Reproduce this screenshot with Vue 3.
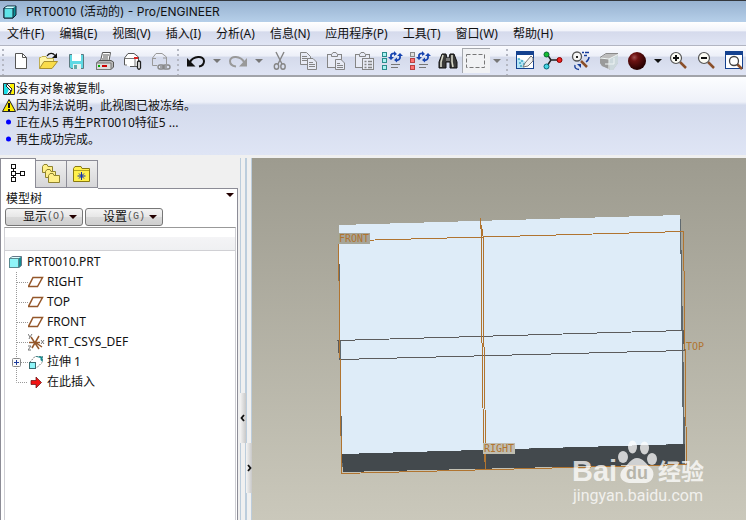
<script setup>
import { ref } from 'vue'

const menus = ['文件(F)', '编辑(E)', '视图(V)', '插入(I)', '分析(A)', '信息(N)', '应用程序(P)', '工具(T)', '窗口(W)', '帮助(H)']

const messages = [
  { kind: 'stop', text: '没有对象被复制。' },
  { kind: 'warn', text: '因为非法说明，此视图已被冻结。' },
  { kind: 'info', text: '正在从5 再生PRT0010特征5 ...' },
  { kind: 'info', text: '再生成功完成。' }
]

const features = [
  { icon: 'plane', text: 'RIGHT' },
  { icon: 'plane', text: 'TOP' },
  { icon: 'plane', text: 'FRONT' },
  { icon: 'csys', text: 'PRT_CSYS_DEF' },
  { icon: 'extrude', text: '拉伸 1', branch: true },
  { icon: 'insert', text: '在此插入' }
]

const activeTab = ref(0)
</script>

<template>
  <div class="app">
    <header class="title">
      <svg width="14" height="14" viewBox="0 0 14 14" aria-hidden="true">
        <path d="M1 3L4 1H13V10L10 13H1Z" fill="#0a8f96" stroke="#123" />
        <path d="M1 3H10V13H1Z" fill="#5fe3e8" stroke="#123" />
        <path d="M1.5 3L4 1.5H12.5L10 3Z" fill="#d8ffff" />
      </svg>
      <h1>PRT0010 (活动的) - Pro/ENGINEER</h1>
    </header>

    <nav class="menu">
      <button v-for="m in menus" :key="m" type="button">{{ m }}</button>
    </nav>

    <div class="toolbar" role="toolbar">
      <span class="grip"></span>
      <button type="button" aria-label="新建">
        <svg viewBox="0 0 28 30"><path d="M8.500 7.500H15.500L19.500 11.500V22.500H8.500Z" fill="#fff" stroke="#555" /><path d="M15.500 7.500V11.500H19.500" fill="none" stroke="#555" /></svg>
      </button>
      <button type="button" aria-label="打开">
        <svg viewBox="0 0 28 30"><path d="M4.500 22V11.500H6L7 10.500H11L12 12.500H18.500V15" fill="#fff6a8" stroke="#c0ae50" /><path d="M4.500 22.500L9 15.500H22.500L17 22.500Z" fill="#f9dc4a" stroke="#a89030" /><path d="M12 10C14 6.500 18 6.500 20 9.500" fill="none" stroke="#111" stroke-width="1.300" /><path d="M22 7V12H17Z" fill="#111" /></svg>
      </button>
      <button type="button" aria-label="保存">
        <svg viewBox="0 0 28 30"><path d="M6.500 8.500H20.500V22.500H8L6.500 21Z" fill="#5fd9e4" stroke="#5c7a80" /><rect x="9" y="8" width="9" height="7" fill="#fff" /><rect x="10" y="18" width="8" height="5" fill="#e8f0f0" /><rect x="11" y="19" width="3" height="4" fill="#6aa" /></svg>
      </button>
      <button type="button" aria-label="打印">
        <svg viewBox="0 0 28 30"><path d="M9.500 15L11.500 6.500H19.500L18 15" fill="#fff" stroke="#555" /><path d="M12 9H18M12 11H17M11 13H17" stroke="#555" /><path d="M5.500 17L8 14.500H20L22.500 16V21L20 23.500H5.500Z" fill="#b8b8b8" stroke="#555" /><path d="M5.500 17H20V23.500H5.500Z" fill="#dcdcdc" stroke="#777" /><rect x="7" y="19" width="2" height="2" fill="#0a0" /><rect x="11" y="19" width="5" height="2" fill="#c00" /></svg>
      </button>
      <button type="button" aria-label="发送邮件">
        <svg viewBox="0 0 28 30"><path d="M5.500 19V12L9 7.500H15L19.500 11V20.500H11" fill="#fff" stroke="#555" /><path d="M5.500 12.500H16V20.500M5.500 19H8" fill="none" stroke="#777" /><rect x="15" y="11" width="4" height="2" fill="#d22" /><path d="M18.500 22V16Q20 14 21.500 16V22Q20 24.500 18.500 22V18" fill="#eee" stroke="#222" stroke-width="1.300" /></svg>
      </button>
      <button type="button" aria-label="发送链接">
        <svg viewBox="0 0 28 30"><path d="M10 19.500H5.500V12L9 7.500H15L19.500 11V18M5.500 12.500H9M16 12H19" fill="none" stroke="#999" /><g fill="none" stroke="#888" stroke-width="1.400"><rect x="11" y="19" width="6" height="4" rx="2" /><rect x="16" y="19" width="7" height="4" rx="2" /><path d="M13 21H20" /></g></svg>
      </button>
      <span class="grip"></span>
      <button type="button" aria-label="撤消">
        <svg viewBox="0 0 28 30"><path d="M8 16C11 10 22 9 22 15C22 18 20 20 17 20.500" fill="none" stroke="#111" stroke-width="2" /><path d="M5 12V20.500H13.500Z" fill="#111" /></svg>
      </button>
      <button class="drop" type="button" aria-label="撤消列表"><i></i></button>
      <button type="button" aria-label="重做">
        <svg viewBox="0 0 28 30"><path d="M20 16C17 10 6 9 6 15C6 18 8 20 12 20.500" fill="none" stroke="#999" stroke-width="2" /><path d="M23 12V20.500H15Z" fill="#999" /></svg>
      </button>
      <button class="drop" type="button" aria-label="重做列表"><i></i></button>
      <button type="button" aria-label="剪切">
        <svg viewBox="0 0 28 30"><g fill="none" stroke="#858585" stroke-width="1.400"><path d="M10 6L16 18M18 6L12 18" /><ellipse cx="10.500" cy="20.500" rx="2.200" ry="2.800" /><ellipse cx="17" cy="20.500" rx="2.200" ry="2.800" /></g></svg>
      </button>
      <button type="button" aria-label="复制">
        <svg viewBox="0 0 28 30"><g fill="#e8ebf5" stroke="#858585"><path d="M6.500 6.500H12.500L16.500 10.500V18.500H6.500Z" /><path d="M8 10.500H13M8 12.500H14M8 14.500H14" /><path d="M13.500 12.500H19L22.500 16V23.500H13.500Z" /><path d="M15 16.500H19M15 18.500H21M15 20.500H21" /></g></svg>
      </button>
      <button type="button" aria-label="粘贴">
        <svg viewBox="0 0 28 30"><g fill="#e8ebf5" stroke="#858585"><rect x="5.500" y="8.500" width="14" height="13" /><path d="M9.500 10.500V8.500L11 6.500H14L15.500 8.500V10.500Z" /><path d="M13.500 13.500H19L22.500 17V23.500H13.500Z" /><path d="M15 17.500H18M15 19.500H21M15 21.500H21" /></g></svg>
      </button>
      <button type="button" aria-label="选择性粘贴">
        <svg viewBox="0 0 28 30"><g fill="#e8ebf5" stroke="#858585"><rect x="5.500" y="8.500" width="14" height="13" /><path d="M9.500 10.500V8.500L11 6.500H14L15.500 8.500V10.500Z" /><rect x="12.500" y="12.500" width="11" height="11" /><path d="M14.500 15.500H16.500M18 15.500H22M14.500 18.500H16.500M18 18.500H22M14.500 21.500H16.500M18 21.500H22" stroke-width="1.500" /></g></svg>
      </button>
      <button type="button" aria-label="再生">
        <svg viewBox="0 0 28 30"><g fill="#a8f2f2" stroke="#2a8c8c"><rect x="4.500" y="6.500" width="4" height="4" /><rect x="4.500" y="12.500" width="4" height="4" /><rect x="4.500" y="19.500" width="4" height="4" /></g><path d="M13 13V9Q14 7 17 7.500M22 8V12Q21 15 18 14" fill="none" stroke="#1744b0" stroke-width="1.800" /><path d="M10 11H16L13 14ZM19 10H25L22 7ZM16 5L19 8L16 10ZM19 11.500V16.500L16 14Z" fill="#1744b0" /><path d="M13 18.500H22M13 21.500H20" stroke="#777" /></svg>
      </button>
      <button type="button" aria-label="再生管理器">
        <svg viewBox="0 0 28 30"><rect x="4.500" y="6.500" width="4" height="4" fill="#ddd" stroke="#888" /><g fill="#ff7070" stroke="#b84040"><rect x="4.500" y="12.500" width="4" height="4" /><rect x="4.500" y="19.500" width="4" height="4" /></g><path d="M13 13V9Q14 7 17 7.500M22 8V12Q21 15 18 14" fill="none" stroke="#1744b0" stroke-width="1.800" /><path d="M10 11H16L13 14ZM19 10H25L22 7ZM16 5L19 8L16 10ZM19 11.500V16.500L16 14Z" fill="#1744b0" /><path d="M13 18.500H22M13 21.500H20" stroke="#777" /></svg>
      </button>
      <button type="button" aria-label="查找">
        <svg viewBox="0 0 28 30"><path d="M8 8H12L13 12H15L16 8H20L23 16V22H16V16H12V22H5V16Z" fill="#3a3a38" stroke="#111" /><path d="M9 9L7 16V21M18 9V16L19 21" fill="none" stroke="#d8d8c8" stroke-width="1.600" /><rect x="12" y="12" width="4" height="3" fill="#777" /></svg>
      </button>
      <button class="pressed" type="button" aria-label="选取框">
        <svg viewBox="0 0 28 30"><rect x="4.500" y="8.500" width="18" height="13" fill="none" stroke="#777" stroke-dasharray="4 2" /></svg>
      </button>
      <button class="drop" type="button" aria-label="选取方式"><i></i></button>
      <span class="grip"></span>
      <button type="button" aria-label="重画">
        <svg viewBox="0 0 28 30"><rect x="5.500" y="5.500" width="17" height="17" fill="#fff" stroke="#14418f" /><rect x="5" y="5" width="18" height="4" fill="#14418f" /><path d="M6 12L12 14L17 18L13 22H6Z" fill="#b5e4f6" /><path d="M7 13H9M10 15H12M8 17H10M12 18H14M9 20H11" stroke="#08a" /><path d="M14 17L20 10L22 12V15L17 20L12 21Z" fill="#f0f0f0" stroke="#777" /></svg>
      </button>
      <button type="button" aria-label="旋转中心">
        <svg viewBox="0 0 28 30"><path d="M8 8L12 14L8 20M12 14H20" fill="none" stroke="#222" stroke-width="1.500" /><circle cx="7.500" cy="8.500" r="2.500" fill="#15bd30" stroke="#063" /><circle cx="7.500" cy="20.500" r="2.500" fill="#45d7e5" stroke="#067" /><circle cx="20.500" cy="14" r="2.500" fill="#f02020" stroke="#800" /></svg>
      </button>
      <button type="button" aria-label="定向模式">
        <svg viewBox="0 0 28 30"><path d="M14 15L20 21" stroke="#8a4f2a" stroke-width="2.500" /><circle cx="10" cy="10.500" r="4.500" fill="#f4f4f4" stroke="#555" stroke-width="1.300" /><rect x="9" y="10" width="2" height="2" fill="#222" /><path d="M15 6.500H17M18 6.500H22M17 9.500H20M22 11Q22 14 19 16M8 19Q7 23 12 23.500" fill="none" stroke="#173d99" stroke-width="1.400" /><path d="M10 18H14V22Z" fill="#173d99" /></svg>
      </button>
      <button type="button" aria-label="外观库">
        <svg viewBox="0 0 28 30"><path d="M5 12L11 8H23V17L18 24L7 20L5 17Z" fill="#bdbdbd" /><path d="M5 12L14 13L16 24L7 20L5 17Z" fill="#9a9a9a" /><path d="M14 13L23 9V17L18 24H15Z" fill="#ccd8dc" /><path d="M5 12L14 13L23 8.500M14 13V23M10 18H19V12" fill="none" stroke="#eef4f4" /><path d="M5 11.500L11 7.500H23" fill="none" stroke="#8a8a8a" /></svg>
      </button>
      <button type="button" aria-label="着色">
        <svg viewBox="0 0 28 30">
          <defs><radialGradient id="ball" cx="35%" cy="30%" r="70%"><stop offset="0" stop-color="#a05050" /><stop offset=".3" stop-color="#6d1212" /><stop offset="1" stop-color="#240000" /></radialGradient></defs>
          <circle cx="14" cy="15" r="9" fill="url(#ball)" />
        </svg>
      </button>
      <button class="drop dark" type="button" aria-label="着色方式"><i></i></button>
      <button type="button" aria-label="放大">
        <svg viewBox="0 0 28 30"><path d="M15 16L21 22" stroke="#8a4f2a" stroke-width="2.500" /><circle cx="11" cy="12" r="5.500" fill="#fbfbf4" stroke="#555" stroke-width="1.200" /><path d="M8 12H14M11 9V15" stroke="#111" stroke-width="2" /></svg>
      </button>
      <button type="button" aria-label="缩小">
        <svg viewBox="0 0 28 30"><path d="M15 16L21 22" stroke="#8a4f2a" stroke-width="2.500" /><circle cx="11" cy="12" r="5.500" fill="#fbfbf4" stroke="#555" stroke-width="1.200" /><path d="M8 12H14" stroke="#111" stroke-width="2" /></svg>
      </button>
      <button type="button" aria-label="重新调整">
        <svg viewBox="0 0 28 30"><rect x="4.500" y="5.500" width="17" height="17" fill="#fff" stroke="#14418f" /><rect x="4" y="5" width="18" height="4" fill="#14418f" /><path d="M16 18L21 23" stroke="#8a4f2a" stroke-width="2.500" /><circle cx="13" cy="15" r="4.500" fill="#fff" stroke="#444" stroke-width="1.300" /></svg>
      </button>
    </div>

    <ul class="messages">
      <li v-for="m in messages" :key="m.text">
        <svg v-if="m.kind === 'stop'" viewBox="0 0 14 16"><path d="M1 2H6L4 6L7 8L5 13H1Z" fill="#19dfe8" /><path d="M9 2H12V13H8L11 8L7 6Z" fill="#fff200" /><path d="M6 2L4 5L9 10L6 13M5 3L10 8L8 13" fill="none" stroke="#222" /><path d="M1.500 2.500H12.500V13.500H1.500Z" fill="none" stroke="#333" /></svg>
        <svg v-else-if="m.kind === 'warn'" viewBox="0 0 14 16"><path d="M7 1.500L13.500 13.500H.5Z" fill="#ffee00" stroke="#222" /><path d="M7 5V10M7 11V13" stroke="#111" stroke-width="2" /></svg>
        <svg v-else viewBox="0 0 14 16"><circle cx="6.500" cy="7" r="2.500" fill="#00f" /></svg>
        <span>{{ m.text }}</span>
      </li>
    </ul>

    <main class="work">
      <aside class="navigator">
        <div class="tabs" role="tablist">
          <button type="button" role="tab" aria-label="模型树" :class="{ on: activeTab === 0 }" @click="activeTab = 0">
            <svg width="18" height="20" viewBox="0 0 18 20"><g fill="#fff" stroke="#111"><path d="M4.500 5V16M7 9.500H12" /><rect x="2.500" y=".5" width="4" height="4" /><rect x="2.500" y="7.500" width="4" height="4" /><rect x="2.500" y="13.500" width="4" height="4" /><rect x="11.500" y="7.500" width="4" height="4" /></g></svg>
          </button>
          <button type="button" role="tab" aria-label="文件夹" :class="{ on: activeTab === 1 }" @click="activeTab = 1">
            <svg width="18" height="20" viewBox="0 0 18 20"><g fill="#fff08a" stroke="#8f8330"><path d="M.5 8.500V2.500L2 .5H5L6 2.500H10.500V8.500Z" /><path d="M3.500 13.500V7.500L5 5.500H8L9 7.500H13.500V13.500Z" /><path d="M6.500 18.500V11.500L8 9.500H11L12 11.500H17.500V18.500Z" /></g></svg>
          </button>
          <button type="button" role="tab" aria-label="收藏夹" :class="{ on: activeTab === 2 }" @click="activeTab = 2">
            <svg width="18" height="20" viewBox="0 0 18 20"><path d="M.5 17.500V4.500L2 2.500H8L9 4.500H16.500V17.500Z" fill="#fff04c" stroke="#8a7a10" /><path d="M1 6.500H16" stroke="#b5a520" /><path d="M8.500 8V16M4.500 12H12.500M6 9.500L11 14.500M11 9.500L6 14.500" stroke="#1030b0" /></svg>
          </button>
        </div>

        <section class="panel">
          <div class="caption"><h2>模型树</h2><i></i></div>
          <div class="actions">
            <button type="button">显示<span>(O)</span><i></i></button>
            <button type="button">设置<span>(G)</span><i></i></button>
          </div>
          <div class="tree">
            <div class="head"></div>
            <p class="root">
              <svg width="14" height="14" viewBox="0 0 14 14"><path d="M.5 3.500L3.500 1.500H12.500V10.500L10 12.500H.5Z" fill="#128c92" stroke="#678" /><rect x=".5" y="3.500" width="9" height="9" fill="#8ff5f8" stroke="#5a8a90" /><path d="M1.500 3L3.500 2H12L10 3Z" fill="#e0ffff" /></svg>
              <span>PRT0010.PRT</span>
            </p>
            <ul>
              <li v-for="(f, i) in features" :key="f.text">
                <svg class="guide" viewBox="0 0 16 20">
                  <path :d="i === features.length - 1 ? 'M4.500 0V10.500H16' : 'M4.500 0V20M5 10.500H16'" fill="none" stroke="#999" stroke-dasharray="1 1" />
                  <g v-if="f.branch"><rect x=".5" y="6.500" width="8" height="8" rx="1" fill="#fafafa" stroke="#888" /><path d="M2 10.500H7M4.500 8V13" stroke="#1b3a9c" /></g>
                </svg>
                <svg class="icon" viewBox="0 0 18 20">
                  <path v-if="f.icon === 'plane'" d="M5 5.500H14.500L9.500 14.500H.5Z" fill="#fff" stroke="#94572a" stroke-width="1.500" />
                  <g v-else-if="f.icon === 'csys'" fill="none"><path d="M1 10.500H12M3 5L11 17M11 4L4 16M7.500 10.500L14 15" stroke="#94572a" stroke-width="1.500" /><path d="M0 2L2 5L4 2M2 5L1 7M13 8L16 12M16 8L13 12M0 14H3L0 18H3" stroke="#777" /></g>
                  <g v-else-if="f.icon === 'extrude'"><path d="M1.500 10.500L7 4.500H14.500V10L8.500 16" fill="#fff" stroke="#777" stroke-dasharray="2 1" /><path d="M7 4.500H14.500V10L12.500 8V6Z" fill="#128c92" /><rect x="1.500" y="10.500" width="6" height="6" fill="#8ff5f8" stroke="#386a70" /></g>
                  <path v-else d="M3 8.500H8V5L13.500 10.500L8 16V12.500H3Z" fill="#f01414" stroke="#601010" stroke-width=".7" />
                </svg>
                <span>{{ f.text }}</span>
              </li>
            </ul>
          </div>
        </section>
      </aside>

      <div class="sash">
        <button type="button" class="left" aria-label="折叠导航器"><svg width="6" height="8" viewBox="0 0 6 8"><path d="M4 1L1.500 4L4 7" fill="none" stroke="#111" stroke-width="1.800" /></svg></button>
        <button type="button" class="right" aria-label="展开浏览器"><svg width="6" height="8" viewBox="0 0 6 8"><path d="M2 1L4.500 4L2 7" fill="none" stroke="#111" stroke-width="1.800" /></svg></button>
      </div>

      <section class="view">
        <svg viewBox="252 158 494 362" preserveAspectRatio="xMinYMin meet">
          <g shape-rendering="crispEdges">
            <path d="M339 225L680 215L681 222L685 444V464L343 472L341 453Z" fill="#5f696f" />
            <path d="M339 225L680 215L683 444L342 454Z" fill="#deecf8" />
            <path d="M342 454L685 444V464L343 472Z" fill="#43494d" />
            <g fill="none" stroke="#5c5c5c">
              <path d="M338 340.500L683.500 330.500V340L685 350.500L340 359.500L338.500 350Z" />
            </g>
            <g fill="none" stroke="#b07430">
              <path d="M338.500 241L683.500 231.500L686.500 464.500L341.500 473.500Z" />
              <path d="M480.500 218L481.500 240V310L483.500 440L484.500 462M481.500 225L483.500 240V315L485.500 440V470" />
            </g>
            <rect x="338" y="233" width="32" height="11" fill="#a6a598" />
            <rect x="483" y="443" width="32" height="11" fill="#c0beb1" />
          </g>
          <g class="tag">
            <text x="339" y="242">FRONT</text>
            <text x="484" y="452">RIGHT</text>
            <text x="686" y="350">TOP</text>
          </g>
          <g class="mark">
            <text x="572" y="481" class="latin">Bai</text>
            <ellipse cx="623" cy="457" rx="5" ry="6" />
            <ellipse cx="632.500" cy="447" rx="4.500" ry="6.500" />
            <ellipse cx="644.500" cy="448" rx="4.500" ry="6.500" />
            <ellipse cx="652" cy="459" rx="5" ry="6" />
            <path d="M637 458C643 458 646 464 651 468C656 473 653 482 646 483C640 483 634 483 629 483C620 482 618 474 623 469C628 465 631 458 637 458Z" />
            <text x="626" y="479" class="du">du</text>
            <text x="658" y="480" class="cjk">经验</text>
            <text x="573" y="501" class="site">jingyan.baidu.com</text>
          </g>
        </svg>
      </section>
    </main>
  </div>
</template>

<style>
body {
  margin: 0;
}
</style>

<style scoped>
.app {
  display: flex;
  flex-direction: column;
  min-height: 100vh;
  background: #f0f0f0;
  color: #111;
  font: 12px/16px "Noto Sans", "Noto Sans CJK SC", sans-serif;
  overflow: hidden;
}
button {
  margin: 0;
  padding: 0;
  border: 0;
  background: none;
  color: inherit;
  font: inherit;
}
svg {
  display: block;
  flex: none;
}
h1,
h2,
p,
ul {
  margin: 0;
  padding: 0;
  font-size: 12px;
  font-weight: 400;
  list-style: none;
}
.title {
  display: flex;
  align-items: center;
  gap: 9px;
  height: 21px;
  padding-left: 3px;
  border-top: 1px solid #33373c;
  background: linear-gradient(#97b2d0, #b6cfe9);
}
.title h1 {
  font-family: Inter, "Noto Sans CJK SC", sans-serif;
}
.menu {
  display: flex;
  gap: 15px;
  height: 23px;
  padding-left: 7px;
  border-bottom: 1px solid #b2b5c2;
  background: linear-gradient(#fff, #f1f3fa 40%, #d5daec 42%, #e0e5f4);
}
.menu button {
  white-space: nowrap;
}
.toolbar {
  display: flex;
  align-items: stretch;
  height: 29px;
  border-bottom: 2px solid #a2a4aa;
  background: linear-gradient(#fafbfe, #eceff8 35%, #d4daeb 38%, #dfe4f4);
  overflow: hidden;
}
.toolbar button {
  flex: none;
  width: 28px;
}
.toolbar button svg {
  width: 28px;
  height: 30px;
}
.toolbar .drop {
  display: flex;
  align-items: center;
  justify-content: center;
  width: 14px;
}
i {
  width: 0;
  border: 4px solid transparent;
  border-top-color: #777;
  border-bottom: 0;
}
.dark i {
  border-top-color: #111;
}
.toolbar .pressed {
  box-shadow: inset 1px 1px #a5a8ae;
  background: #f1f2f4;
  margin: 2px 0;
}
.pressed svg {
  margin-top: -2px;
}
.grip {
  flex: none;
  width: 7px;
  background: linear-gradient(#b4b7c2, #b4b7c2) 2px 3px / 2px 2px no-repeat, repeating-linear-gradient(transparent 0 3px, #b4b7c2 3px 5px) 2px 0 / 2px 100% no-repeat;
}
.messages {
  height: 74px;
  padding: 4px 0 0 2px;
  background: linear-gradient(#fcfdff, #eef1f9 32%, #d3daec 36%, #dfe5f5);
}
.messages li {
  display: flex;
  height: 17px;
}
.messages svg {
  width: 14px;
  height: 16px;
}
.work {
  display: flex;
  flex: 1;
  padding-top: 3px;
}
.navigator {
  display: flex;
  flex: none;
  flex-direction: column;
  width: 238px;
}
.tabs {
  display: flex;
  align-items: flex-end;
  height: 30px;
}
.tabs button {
  display: flex;
  align-items: center;
  justify-content: center;
  width: 31px;
  height: 28px;
  border: 1px solid #8c8c96;
  border-left: 0;
  background: linear-gradient(#efefef, #d6d6d8);
}
.tabs .on {
  width: 36px;
  height: 30px;
  border: 1px solid #8c8c96;
  border-bottom: 0;
  background: #fff;
}
.panel {
  display: flex;
  flex: 1;
  flex-direction: column;
  padding: 3px 1px 0 3px;
  border: 1px solid #8c8c96;
  border-width: 0 1px;
  background: linear-gradient(#8c8c96, #8c8c96) 97px 0 / 100% 1px no-repeat #fff;
}
.caption {
  display: flex;
  justify-content: space-between;
  height: 17px;
  padding: 0 2px;
}
.caption i {
  height: 0;
  margin-top: 2px;
  border-top-color: #200;
}
.actions {
  display: flex;
  gap: 2px;
  padding: 0 1px;
}
.actions button {
  display: flex;
  align-items: center;
  justify-content: center;
  width: 78px;
  height: 18px;
  padding-left: 12px;
  border: 1px solid #777;
  border-radius: 3px;
  background: linear-gradient(#f4f4f4, #e7e7e7 48%, #d9d9d9 50%, #cfcfcf);
}
.actions span {
  color: #555;
  font-family: "Liberation Mono", monospace;
  font-size: 10px;
}
.actions i {
  margin-left: 4px;
  border-top-color: #200;
}
.tree {
  flex: 1;
  margin-top: 1px;
  border: 1px solid #cfcfd4;
  border-top-color: #999;
  border-bottom: 0;
}
.head {
  height: 22px;
  margin-bottom: 1px;
  border-bottom: 1px solid #d0d0d4;
  background: linear-gradient(#fff 40%, #f4f4f6 42%, #eff0f2);
}
.root,
.tree li {
  display: flex;
  align-items: center;
  height: 20px;
  line-height: 20px;
}
.root {
  gap: 4px;
  padding-left: 4px;
}
.tree li {
  padding-left: 7px;
}
.guide {
  width: 16px;
  height: 20px;
}
.icon {
  width: 18px;
  height: 20px;
  margin-right: 1px;
}
.sash {
  display: flex;
  flex: none;
  align-items: flex-end;
  width: 14px;
  background: linear-gradient(90deg, #f0f0f0 2px, #bccddc 2px 3px, #f0f0f0 3px 7px, #bccddc 7px 9px, #f0f0f0 9px 13px, #bccddc 13px);
}
.sash button {
  display: flex;
  align-items: center;
  width: 6px;
  height: 50px;
  background: linear-gradient(90deg, #f4f4f4, #c8c8c8);
}
.sash .left {
  margin: 0 0 77px 2px;
}
.sash .right {
  margin-bottom: 27px;
}
.view {
  flex: 1;
  min-width: 0;
  background: linear-gradient(#9d9b8f, #cac8bb);
}
.view svg {
  width: 100%;
}
.tag {
  fill: #b07430;
  font: 10px "DejaVu Sans Mono", monospace;
}
.mark {
  fill: #fff;
  opacity: 0.75;
}
.latin {
  font: bold 29px "Liberation Sans", sans-serif;
}
.mark .du {
  fill: #b3b1a6;
  font: bold 18px "Liberation Sans", sans-serif;
}
.cjk {
  font: bold 23px "Noto Sans CJK SC", sans-serif;
}
.site {
  font: 16px Roboto, sans-serif;
}
</style>
